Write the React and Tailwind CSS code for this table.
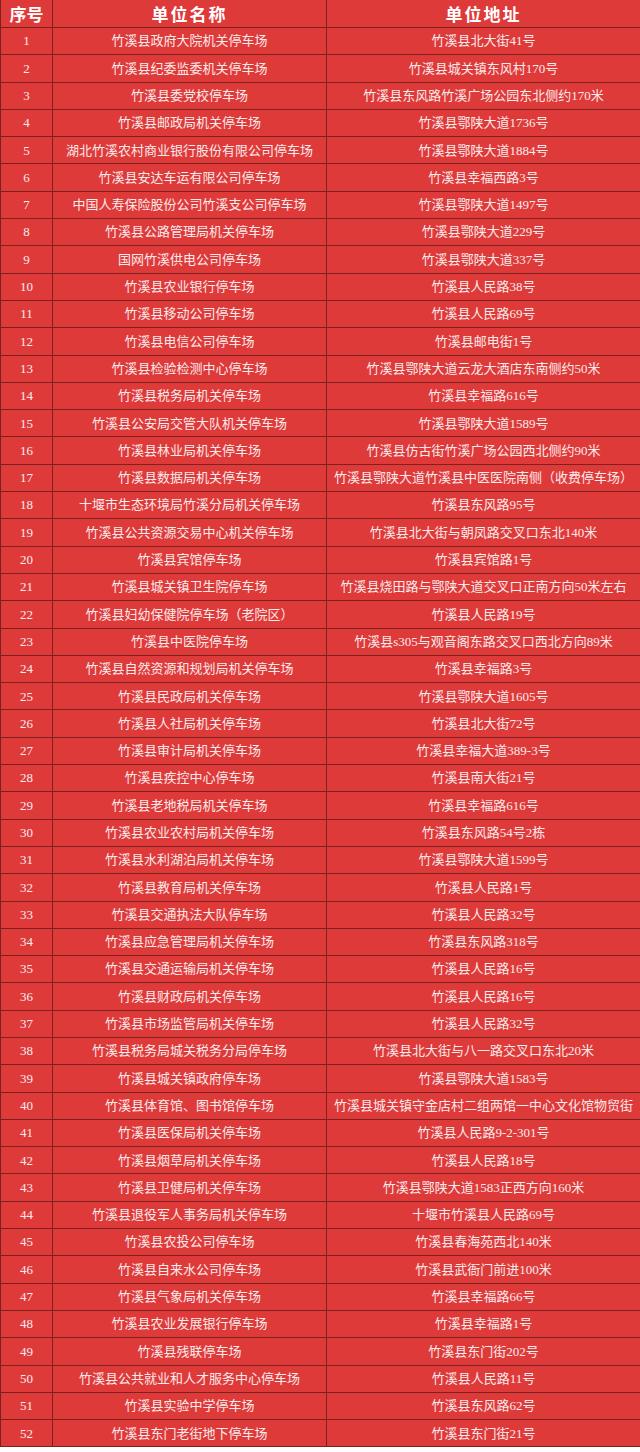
import React from 'react';

const rows = [
  ['竹溪县政府大院机关停车场', '竹溪县北大街41号'],
  ['竹溪县纪委监委机关停车场', '竹溪县城关镇东风村170号'],
  ['竹溪县委党校停车场', '竹溪县东风路竹溪广场公园东北侧约170米'],
  ['竹溪县邮政局机关停车场', '竹溪县鄂陕大道1736号'],
  ['湖北竹溪农村商业银行股份有限公司停车场', '竹溪县鄂陕大道1884号'],
  ['竹溪县安达车运有限公司停车场', '竹溪县幸福西路3号'],
  ['中国人寿保险股份公司竹溪支公司停车场', '竹溪县鄂陕大道1497号'],
  ['竹溪县公路管理局机关停车场', '竹溪县鄂陕大道229号'],
  ['国网竹溪供电公司停车场', '竹溪县鄂陕大道337号'],
  ['竹溪县农业银行停车场', '竹溪县人民路38号'],
  ['竹溪县移动公司停车场', '竹溪县人民路69号'],
  ['竹溪县电信公司停车场', '竹溪县邮电街1号'],
  ['竹溪县检验检测中心停车场', '竹溪县鄂陕大道云龙大酒店东南侧约50米'],
  ['竹溪县税务局机关停车场', '竹溪县幸福路616号'],
  ['竹溪县公安局交管大队机关停车场', '竹溪县鄂陕大道1589号'],
  ['竹溪县林业局机关停车场', '竹溪县仿古街竹溪广场公园西北侧约90米'],
  ['竹溪县数据局机关停车场', '竹溪县鄂陕大道竹溪县中医医院南侧（收费停车场）'],
  ['十堰市生态环境局竹溪分局机关停车场', '竹溪县东风路95号'],
  ['竹溪县公共资源交易中心机关停车场', '竹溪县北大街与朝凤路交叉口东北140米'],
  ['竹溪县宾馆停车场', '竹溪县宾馆路1号'],
  ['竹溪县城关镇卫生院停车场', '竹溪县烧田路与鄂陕大道交叉口正南方向50米左右'],
  ['竹溪县妇幼保健院停车场（老院区）', '竹溪县人民路19号'],
  ['竹溪县中医院停车场', '竹溪县s305与观音阁东路交叉口西北方向89米'],
  ['竹溪县自然资源和规划局机关停车场', '竹溪县幸福路3号'],
  ['竹溪县民政局机关停车场', '竹溪县鄂陕大道1605号'],
  ['竹溪县人社局机关停车场', '竹溪县北大街72号'],
  ['竹溪县审计局机关停车场', '竹溪县幸福大道389-3号'],
  ['竹溪县疾控中心停车场', '竹溪县南大街21号'],
  ['竹溪县老地税局机关停车场', '竹溪县幸福路616号'],
  ['竹溪县农业农村局机关停车场', '竹溪县东风路54号2栋'],
  ['竹溪县水利湖泊局机关停车场', '竹溪县鄂陕大道1599号'],
  ['竹溪县教育局机关停车场', '竹溪县人民路1号'],
  ['竹溪县交通执法大队停车场', '竹溪县人民路32号'],
  ['竹溪县应急管理局机关停车场', '竹溪县东风路318号'],
  ['竹溪县交通运输局机关停车场', '竹溪县人民路16号'],
  ['竹溪县财政局机关停车场', '竹溪县人民路16号'],
  ['竹溪县市场监管局机关停车场', '竹溪县人民路32号'],
  ['竹溪县税务局城关税务分局停车场', '竹溪县北大街与八一路交叉口东北20米'],
  ['竹溪县城关镇政府停车场', '竹溪县鄂陕大道1583号'],
  ['竹溪县体育馆、图书馆停车场', '竹溪县城关镇守金店村二组两馆一中心文化馆物贸街'],
  ['竹溪县医保局机关停车场', '竹溪县人民路9-2-301号'],
  ['竹溪县烟草局机关停车场', '竹溪县人民路18号'],
  ['竹溪县卫健局机关停车场', '竹溪县鄂陕大道1583正西方向160米'],
  ['竹溪县退役军人事务局机关停车场', '十堰市竹溪县人民路69号'],
  ['竹溪县农投公司停车场', '竹溪县春海苑西北140米'],
  ['竹溪县自来水公司停车场', '竹溪县武衙门前进100米'],
  ['竹溪县气象局机关停车场', '竹溪县幸福路66号'],
  ['竹溪县农业发展银行停车场', '竹溪县幸福路1号'],
  ['竹溪县残联停车场', '竹溪县东门街202号'],
  ['竹溪县公共就业和人才服务中心停车场', '竹溪县人民路11号'],
  ['竹溪县实验中学停车场', '竹溪县东风路62号'],
  ['竹溪县东门老街地下停车场', '竹溪县东门街21号'],
];

const cell = 'flex items-center justify-center border-r border-b border-[#7d2020] whitespace-nowrap overflow-hidden';

export default function App() {
  return (
    <div className="bg-white min-h-[1452px] w-[640px]">
      <div className="grid grid-cols-[52px_274px_314px] bg-[#df3a3a] text-[#fbeaea] border-l border-[#7d2020] font-['Liberation_Serif','Noto_Sans_CJK_SC',serif]">
        {/* header */}
        <div className={`${cell} h-[28px] text-[17px] font-bold font-['Noto_Sans_CJK_SC',sans-serif] text-white`}>序号</div>
        <div className={`${cell} h-[28px] text-[17px] font-bold font-['Noto_Sans_CJK_SC',sans-serif] text-white tracking-[2px]`}>单位名称</div>
        <div className={`${cell} h-[28px] text-[17px] font-bold font-['Noto_Sans_CJK_SC',sans-serif] text-white tracking-[2px]`}>单位地址</div>

        {rows.map((r, i) => (
          <React.Fragment key={i}>
            <div className={`${cell} h-[27.31px] text-[13px]`}>{i + 1}</div>
            <div className={`${cell} h-[27.31px] text-[13px]`}>{r[0]}</div>
            <div className={`${cell} h-[27.31px] text-[13px]`}>{r[1]}</div>
          </React.Fragment>
        ))}
      </div>
    </div>
  );
}
